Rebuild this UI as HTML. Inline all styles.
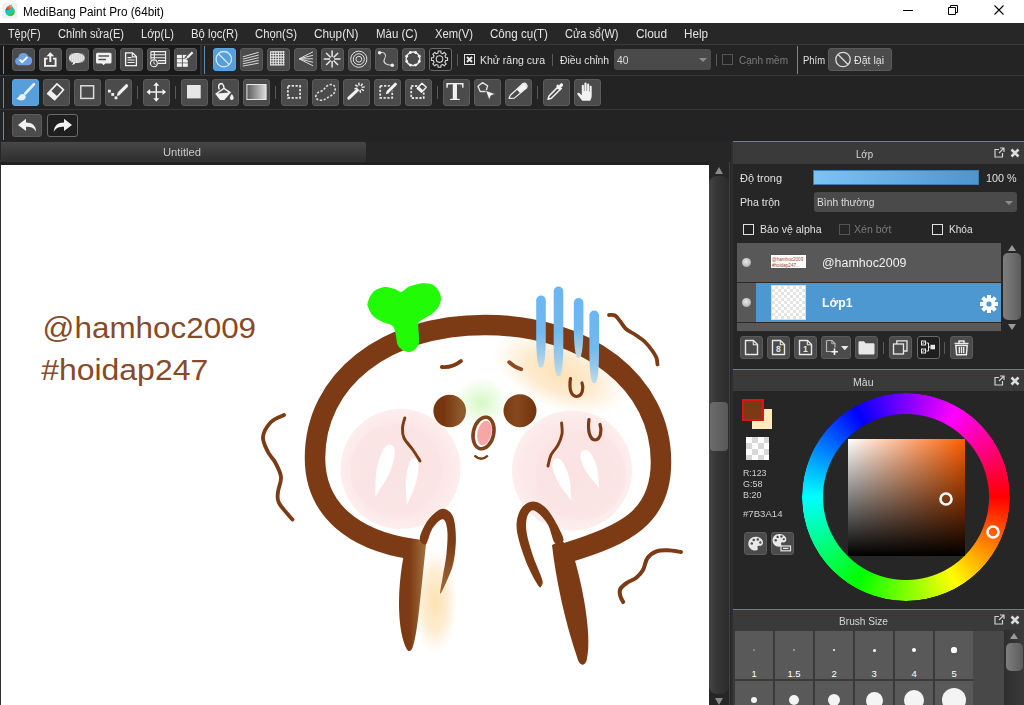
<!DOCTYPE html>
<html lang="vi"><head><meta charset="utf-8"><title>MediBang Paint Pro (64bit)</title>
<style>
html,body{margin:0;padding:0;}
body{width:1024px;height:705px;overflow:hidden;position:relative;background:#262626;font-family:"Liberation Sans",sans-serif;}
.t{position:absolute;white-space:pre;transform-origin:0 50%;display:inline-block;}
.b{position:absolute;box-sizing:border-box;background:#4b4b4b;border:1px solid #5b5b5b;border-radius:3px;}
.b.on{background:#569fda;border-color:#5ea6de;}
.b.dk{background:#1f1f1f;border-color:#6a6a6a;}
.b svg{position:absolute;left:0;top:0;}
.sep{position:absolute;width:1px;background:#5a5a5a;}
svg{display:block;overflow:visible}
</style></head><body>

<div class="" style="position:absolute;left:0px;top:0px;width:1024px;height:23px;background:#fff;"></div>
<svg style="position:absolute;left:2px;top:3px" width="16" height="16" viewBox="2 3 16 16">
<defs>
<linearGradient id="ti1" x1="0.2" y1="0.2" x2="0.8" y2="1"><stop offset="0" stop-color="#18a0e8"/><stop offset="0.45" stop-color="#18c8c8"/><stop offset="0.75" stop-color="#30d040"/><stop offset="1" stop-color="#109828"/></linearGradient>
<linearGradient id="ti2" x1="0" y1="1" x2="1" y2="0"><stop offset="0" stop-color="#e81818"/><stop offset="0.5" stop-color="#f06018"/><stop offset="1" stop-color="#f8c040"/></linearGradient>
</defs>
<rect x="2.3" y="3.1" width="15" height="15.300" rx="1.500" fill="#f0f0f6"/>
<path d="M11.300 4.800C9 5.500 5.300 8 5.300 11.600a4.800 4.600 0 0 0 9.600 0C14.900 9 12.500 7.500 11.300 4.800z" fill="url(#ti1)"/>
<path d="M11.300 4.800C9 5.400 6 7.200 5.500 10C7.500 10.300 10 9.500 11.800 7.800C11.900 6.800 11.700 5.800 11.300 4.800z" fill="url(#ti2)"/>
</svg>

<span class="t" style="left:22.9px;top:6.24px;font-size:12px;line-height:12px;color:#000;font-weight:normal;transform:scaleX(0.9786);">MediBang Paint Pro (64bit)</span>
<svg style="position:absolute;left:880px;top:0" width="144" height="23" viewBox="880 0 144 23" fill="none" stroke="#000" stroke-width="1">
<path d="M903 10.5h10"/>
<path d="M948.5 7.5h7v7h-7zM950.5 7.5v-2h7v7h-2"/>
<path d="M994.5 5.5l9 9M1003.5 5.5l-9 9" stroke-width="1.1"/>
</svg>
<div class="" style="position:absolute;left:0px;top:23px;width:1024px;height:21px;background:#272727;"></div>
<div class="" style="position:absolute;left:0px;top:44px;width:1024px;height:1px;background:#3a3a3a;"></div>
<span class="t" style="left:8.0px;top:28.22px;font-size:12.5px;line-height:12.5px;color:#e4e4e4;font-weight:normal;transform:scaleX(0.8667);">Tệp(F)</span>
<span class="t" style="left:57.5px;top:28.22px;font-size:12.5px;line-height:12.5px;color:#e4e4e4;font-weight:normal;transform:scaleX(0.8874);">Chỉnh sửa(E)</span>
<span class="t" style="left:140.5px;top:28.22px;font-size:12.5px;line-height:12.5px;color:#e4e4e4;font-weight:normal;transform:scaleX(0.8826);">Lớp(L)</span>
<span class="t" style="left:190.5px;top:28.22px;font-size:12.5px;line-height:12.5px;color:#e4e4e4;font-weight:normal;transform:scaleX(0.9022);">Bộ lọc(R)</span>
<span class="t" style="left:254.5px;top:28.22px;font-size:12.5px;line-height:12.5px;color:#e4e4e4;font-weight:normal;transform:scaleX(0.9023);">Chọn(S)</span>
<span class="t" style="left:313.5px;top:28.22px;font-size:12.5px;line-height:12.5px;color:#e4e4e4;font-weight:normal;transform:scaleX(0.9418);">Chụp(N)</span>
<span class="t" style="left:375.5px;top:28.22px;font-size:12.5px;line-height:12.5px;color:#e4e4e4;font-weight:normal;transform:scaleX(0.9190);">Màu (C)</span>
<span class="t" style="left:434.5px;top:28.22px;font-size:12.5px;line-height:12.5px;color:#e4e4e4;font-weight:normal;transform:scaleX(0.8968);">Xem(V)</span>
<span class="t" style="left:489.5px;top:28.22px;font-size:12.5px;line-height:12.5px;color:#e4e4e4;font-weight:normal;transform:scaleX(0.9275);">Công cụ(T)</span>
<span class="t" style="left:564.5px;top:28.22px;font-size:12.5px;line-height:12.5px;color:#e4e4e4;font-weight:normal;transform:scaleX(0.8748);">Cửa sổ(W)</span>
<span class="t" style="left:635.5px;top:28.22px;font-size:12.5px;line-height:12.5px;color:#e4e4e4;font-weight:normal;transform:scaleX(0.9488);">Cloud</span>
<span class="t" style="left:683.5px;top:28.22px;font-size:12.5px;line-height:12.5px;color:#e4e4e4;font-weight:normal;transform:scaleX(0.9332);">Help</span>
<div class="" style="position:absolute;left:0px;top:45px;width:1024px;height:30px;background:#242424;"></div>
<div class="" style="position:absolute;left:0px;top:45px;width:200px;height:30px;background:#191919;"></div>
<div class="" style="position:absolute;left:0px;top:75px;width:1024px;height:1px;background:#383838;"></div>
<div class="" style="position:absolute;left:0px;top:76px;width:1024px;height:33px;background:#232323;"></div>
<div class="" style="position:absolute;left:0px;top:109px;width:1024px;height:1px;background:#383838;"></div>
<div class="" style="position:absolute;left:0px;top:110px;width:1024px;height:31px;background:#232323;"></div>
<div class="" style="position:absolute;left:0px;top:141px;width:1024px;height:23px;background:#262626;"></div>
<div class="" style="position:absolute;left:3px;top:46px;width:1px;height:28px;background:#5b8db5;"></div>
<div class="" style="position:absolute;left:3px;top:78px;width:1px;height:30px;background:#5b8db5;"></div>
<div class="" style="position:absolute;left:3px;top:112px;width:1px;height:28px;background:#5b8db5;"></div>
<div class="" style="position:absolute;left:204px;top:46px;width:1px;height:28px;background:#5b8db5;"></div>
<div class="" style="position:absolute;left:797px;top:46px;width:1px;height:28px;background:#5b8db5;"></div>
<div class="" style="position:absolute;left:200px;top:45px;width:2px;height:30px;background:#333;"></div>
<div class="b " style="left:12px;top:48px;width:23px;height:23px"><svg style="left:-1px;top:-1px" width="23" height="23" viewBox="0 0 23 23"><path d="M6.8 17.2a3.9 3.9 0 0 1-.6-7.7a5.2 5.2 0 0 1 10-1.2a4.5 4.5 0 0 1 .2 8.9z" fill="#6f9fe6"/><path d="M7.6 11.6l2.6 2.6l5.2-5.4" fill="none" stroke="#fff" stroke-width="1.9"/></svg></div>
<div class="b " style="left:39px;top:48px;width:23px;height:23px"><svg style="left:-1px;top:-1px" width="23" height="23" viewBox="0 0 23 23"><path d="M8.6 10.6H6v7.3h10.6v-7.3H14" fill="none" stroke="#f2f2f2" stroke-width="1.9"/><path d="M11.3 14V5.5" stroke="#f2f2f2" stroke-width="2"/><path d="M7.4 8.3l3.9-4l3.9 4z" fill="#f2f2f2"/></svg></div>
<div class="b " style="left:66px;top:48px;width:23px;height:23px"><svg style="left:-1px;top:-1px" width="23" height="23" viewBox="0 0 23 23"><path d="M10.8 5c4.4 0 7.9 2.2 7.9 5s-3.5 5-7.9 5c-.5 0-1 0-1.5-.1c-.6 1-1.700 1.800-3.200 2.200c.7-.8 1-1.700.9-2.700c-2.500-.8-4.100-2.500-4.100-4.400c0-2.800 3.500-5 7.900-5z" fill="#f2f2f2"/><path d="M5.5 5v10" stroke="#b8b8b8" stroke-width=".45"/><path d="M7.7 5v10" stroke="#b8b8b8" stroke-width=".45"/><path d="M9.9 5v10" stroke="#b8b8b8" stroke-width=".45"/><path d="M12.1 5v10" stroke="#b8b8b8" stroke-width=".45"/><path d="M14.3 5v10" stroke="#b8b8b8" stroke-width=".45"/><path d="M16.5 5v10" stroke="#b8b8b8" stroke-width=".45"/><path d="M3 7h16" stroke="#b8b8b8" stroke-width=".45"/><path d="M3 9h16" stroke="#b8b8b8" stroke-width=".45"/><path d="M3 11h16" stroke="#b8b8b8" stroke-width=".45"/><path d="M3 13h16" stroke="#b8b8b8" stroke-width=".45"/></svg></div>
<div class="b " style="left:93px;top:48px;width:23px;height:23px"><svg style="left:-1px;top:-1px" width="23" height="23" viewBox="0 0 23 23"><path d="M4.500 4.800h12.500a1.500 1.500 0 0 1 1.500 1.500v7.600a1.500 1.500 0 0 1-1.500 1.500h-4.700l-1.700 1.800l-1.700-1.800h-4.400a1.500 1.500 0 0 1-1.500-1.500v-7.600a1.500 1.500 0 0 1 1.500-1.500z" fill="#f2f2f2"/><path d="M5.500 8.100h10.500M5.500 11.600h7.500" stroke="#555" stroke-width="1.500"/></svg></div>
<div class="b " style="left:120px;top:48px;width:23px;height:23px"><svg style="left:-1px;top:-1px" width="23" height="23" viewBox="0 0 23 23"><path d="M5.600 4.800h7l3.800 3.800v9.100h-10.800z" fill="none" stroke="#f2f2f2" stroke-width="1.300"/><path d="M12.300 5v3.900h3.900" fill="none" stroke="#f2f2f2" stroke-width="1.100"/><path d="M7.500 9.600h4M7.500 12h7M7.500 14.500h7" stroke="#f2f2f2" stroke-width="1.200"/></svg></div>
<div class="b " style="left:147px;top:48px;width:23px;height:23px"><svg style="left:-1px;top:-1px" width="23" height="23" viewBox="0 0 23 23"><path d="M3.900 3.600h14.700v11.800h-8M3.900 3.600v8M3.900 6.700h14.700M3.900 9.700h14.700M11 12.600h7.600M7.300 3.600v7.500" fill="none" stroke="#f2f2f2" stroke-width="1.100"/><circle cx="6.900" cy="15.300" r="3.400" fill="#4b4b4b" stroke="#f2f2f2" stroke-width="1.100"/><path d="M6.900 13.400v2l1.500 1" fill="none" stroke="#f2f2f2" stroke-width=".9"/></svg></div>
<div class="b " style="left:174px;top:48px;width:23px;height:23px"><svg style="left:-1px;top:-1px" width="23" height="23" viewBox="0 0 23 23"><rect x="2.9" y="6.9" width="5" height="3.500" fill="#f2f2f2"/><rect x="2.9" y="11.1" width="5" height="3.500" fill="#f2f2f2"/><rect x="2.9" y="15.3" width="5" height="3.500" fill="#f2f2f2"/><rect x="8.8" y="6.9" width="5" height="3.500" fill="#f2f2f2"/><rect x="8.8" y="11.1" width="5" height="3.500" fill="#f2f2f2"/><rect x="8.8" y="15.3" width="5" height="3.500" fill="#f2f2f2"/><path d="M18.300 4.500l-6.300 6.300" stroke="#4b4b4b" stroke-width="4.500"/><path d="M18.600 4.300l-5.400 5.400" stroke="#f2f2f2" stroke-width="2.300"/><path d="M11.300 11.600l.6-2.400l1.800 1.800z" fill="#f2f2f2"/></svg></div>
<div class="b on" style="left:213px;top:48px;width:23px;height:23px"><svg style="left:-1px;top:-1px" width="23" height="23" viewBox="0 0 23 23"><circle cx="10.800" cy="11.200" r="7.700" fill="none" stroke="#d2e8fa" stroke-width="1.300"/><path d="M5.400 5.700l10.900 10.900" stroke="#d2e8fa" stroke-width="1.300"/></svg></div>
<div class="b " style="left:240px;top:48px;width:23px;height:23px"><svg style="left:-1px;top:-1px" width="23" height="23" viewBox="0 0 23 23"><path d="M2.800 8.9L18.700 4.3" stroke="#d8d8d8" stroke-width="1"/><path d="M2.800 11.2L18.700 7.0" stroke="#d8d8d8" stroke-width="1"/><path d="M2.800 13.5L18.700 9.7" stroke="#d8d8d8" stroke-width="1"/><path d="M2.800 15.8L18.700 12.4" stroke="#d8d8d8" stroke-width="1"/><path d="M2.800 18.1L18.700 15.1" stroke="#d8d8d8" stroke-width="1"/></svg></div>
<div class="b " style="left:267px;top:48px;width:23px;height:23px"><svg style="left:-1px;top:-1px" width="23" height="23" viewBox="0 0 23 23"><path d="M3.6 3.200v14M3 3.9h14.500" stroke="#e4e4e4" stroke-width="1.100"/><path d="M6.2 3.200v14M3 6.5h14.500" stroke="#e4e4e4" stroke-width="1.100"/><path d="M8.8 3.200v14M3 9.1h14.500" stroke="#e4e4e4" stroke-width="1.100"/><path d="M11.4 3.200v14M3 11.7h14.500" stroke="#e4e4e4" stroke-width="1.100"/><path d="M14.0 3.200v14M3 14.3h14.500" stroke="#e4e4e4" stroke-width="1.100"/><path d="M16.6 3.200v14M3 16.9h14.500" stroke="#e4e4e4" stroke-width="1.100"/></svg></div>
<div class="b " style="left:294px;top:48px;width:23px;height:23px"><svg style="left:-1px;top:-1px" width="23" height="23" viewBox="0 0 23 23"><path d="M5.100 10.800L19 3.8" stroke="#dcdcdc" stroke-width="1"/><path d="M5.100 10.800L19 7.3" stroke="#dcdcdc" stroke-width="1"/><path d="M5.100 10.800L19 10.8" stroke="#dcdcdc" stroke-width="1"/><path d="M5.100 10.800L19 14.3" stroke="#dcdcdc" stroke-width="1"/><path d="M5.100 10.800L19 17.8" stroke="#dcdcdc" stroke-width="1"/></svg></div>
<div class="b " style="left:321px;top:48px;width:23px;height:23px"><svg style="left:-1px;top:-1px" width="23" height="23" viewBox="0 0 23 23"><path d="M13.10 11.00L19.50 11.00" stroke="#e8e8e8" stroke-width="1.500"/><path d="M12.51 12.41L17.04 16.94" stroke="#e8e8e8" stroke-width="1.500"/><path d="M11.10 13.00L11.10 19.40" stroke="#e8e8e8" stroke-width="1.500"/><path d="M9.69 12.41L5.16 16.94" stroke="#e8e8e8" stroke-width="1.500"/><path d="M9.10 11.00L2.70 11.00" stroke="#e8e8e8" stroke-width="1.500"/><path d="M9.69 9.59L5.16 5.06" stroke="#e8e8e8" stroke-width="1.500"/><path d="M11.10 9.00L11.10 2.60" stroke="#e8e8e8" stroke-width="1.500"/><path d="M12.51 9.59L17.04 5.06" stroke="#e8e8e8" stroke-width="1.500"/></svg></div>
<div class="b " style="left:348px;top:48px;width:23px;height:23px"><svg style="left:-1px;top:-1px" width="23" height="23" viewBox="0 0 23 23"><circle cx="10.800" cy="11.200" r="8.1" fill="none" stroke="#e0e0e0" stroke-width="1"/><circle cx="10.800" cy="11.200" r="5.5" fill="none" stroke="#e0e0e0" stroke-width="1"/><circle cx="10.800" cy="11.200" r="2.9" fill="none" stroke="#e0e0e0" stroke-width="1"/></svg></div>
<div class="b " style="left:375px;top:48px;width:23px;height:23px"><svg style="left:-1px;top:-1px" width="23" height="23" viewBox="0 0 23 23"><path d="M4.500 4.800C11 3.500 11.500 8 9.500 11C7.500 14.500 11 17.500 17.300 17.200" fill="none" stroke="#d8d8d8" stroke-width="1.100"/><circle cx="4.600" cy="4.800" r="1.800" fill="#eee"/><circle cx="17.300" cy="17.200" r="1.800" fill="#eee"/></svg></div>
<div class="b " style="left:402px;top:48px;width:23px;height:23px"><svg style="left:-1px;top:-1px" width="23" height="23" viewBox="0 0 23 23"><circle cx="11" cy="10.800" r="6.800" fill="none" stroke="#e4e4e4" stroke-width="1.500"/><circle cx="17.28" cy="13.40" r="1.400" fill="#f4f4f4"/><circle cx="13.60" cy="17.08" r="1.400" fill="#f4f4f4"/><circle cx="8.40" cy="17.08" r="1.400" fill="#f4f4f4"/><circle cx="4.72" cy="13.40" r="1.400" fill="#f4f4f4"/><circle cx="4.72" cy="8.20" r="1.400" fill="#f4f4f4"/><circle cx="8.40" cy="4.52" r="1.400" fill="#f4f4f4"/><circle cx="13.60" cy="4.52" r="1.400" fill="#f4f4f4"/><circle cx="17.28" cy="8.20" r="1.400" fill="#f4f4f4"/></svg></div>
<div class="b dk" style="left:429px;top:48px;width:23px;height:23px"><svg style="left:-1px;top:-1px" width="23" height="23" viewBox="0 0 23 23"><path d="M18.58 9.69L18.58 12.51L16.63 12.57L15.87 14.39L17.21 15.82L15.22 17.81L13.79 16.47L11.97 17.23L11.91 19.18L9.09 19.18L9.03 17.23L7.21 16.47L5.78 17.81L3.79 15.82L5.13 14.39L4.37 12.57L2.42 12.51L2.42 9.69L4.37 9.63L5.13 7.81L3.79 6.38L5.78 4.39L7.21 5.73L9.03 4.97L9.09 3.02L11.91 3.02L11.97 4.97L13.79 5.73L15.22 4.39L17.21 6.38L15.87 7.81L16.63 9.63Z" fill="none" stroke="#d8d8d8" stroke-width="1.100" stroke-linejoin="round"/><circle cx="10.500" cy="11.100" r="3.300" fill="none" stroke="#d8d8d8" stroke-width="1.100"/></svg></div>
<div class="sep" style="left:457px;top:54px;height:12px"></div>
<div class="" style="position:absolute;left:464px;top:54px;width:11px;height:11px;box-sizing:border-box;border:1px solid #e0e0e0;background:#222;"><svg width="9" height="9" viewBox="0 0 9 9"><path d="M2 2l5 5M7 2l-5 5" stroke="#e8e8e8" stroke-width="2"/></svg></div>
<span class="t" style="left:480.0px;top:54.57px;font-size:11.5px;line-height:11.5px;color:#e0e0e0;font-weight:normal;transform:scaleX(0.9151);">Khử răng cưa</span>
<div class="sep" style="left:552px;top:54px;height:12px"></div>
<span class="t" style="left:560.0px;top:54.57px;font-size:11.5px;line-height:11.5px;color:#e0e0e0;font-weight:normal;transform:scaleX(0.9017);">Điều chỉnh</span>
<div class="" style="position:absolute;left:614px;top:49px;width:97px;height:21px;background:#4a4a4a;border-radius:3px;"></div>
<span class="t" style="left:617.0px;top:54.99px;font-size:11px;line-height:11px;color:#dcdcdc;font-weight:normal;transform:scaleX(0.9388);">40</span>
<svg style="position:absolute;left:699px;top:58px" width="8" height="4"><path d="M0 0h8l-4 4z" fill="#8c8c8c"/></svg>
<div class="sep" style="left:716px;top:54px;height:12px"></div>
<div class="" style="position:absolute;left:722px;top:54px;width:11px;height:11px;box-sizing:border-box;border:1px solid #555;"></div>
<span class="t" style="left:739.0px;top:54.57px;font-size:11.5px;line-height:11.5px;color:#7c7c7c;font-weight:normal;transform:scaleX(0.8711);">Cạnh mềm</span>
<span class="t" style="left:803.0px;top:54.57px;font-size:11.5px;line-height:11.5px;color:#e0e0e0;font-weight:normal;transform:scaleX(0.8196);">Phím</span>
<div class="b " style="left:828px;top:48px;width:64px;height:23px"><svg width="62" height="21" viewBox="0 0 62 21"><circle cx="14" cy="10.5" r="7.2" fill="none" stroke="#dcdcdc" stroke-width="1.3"/><path d="M9 5.5l10 10" stroke="#dcdcdc" stroke-width="1.3"/></svg></div>
<span class="t" style="left:854.0px;top:54.57px;font-size:11.5px;line-height:11.5px;color:#e0e0e0;font-weight:normal;transform:scaleX(0.9200);">Đặt lại</span>
<div class="b on" style="left:12px;top:79px;width:27px;height:27px"><svg style="left:-1px;top:-1px" width="27" height="27" viewBox="0 0 27 27"><path d="M22 5.200L13.300 14.500" stroke="#e8f2fa" stroke-width="2.600" stroke-linecap="round"/><path d="M4.300 19.300c1.500-.3 2.500-1.500 3.500-3.300c1.500-1.500 4-1.500 5.300 0c1.200 1.500.8 3.500-1 4.700c-2.300 1.300-5.500.8-7.800-1.400z" fill="#e8f2fa"/></svg></div>
<div class="b " style="left:43px;top:79px;width:27px;height:27px"><svg style="left:-1px;top:-1px" width="27" height="27" viewBox="0 0 27 27"><path d="M14 4.800l6.600 6l-9 9.800l-6.900-6z" fill="none" stroke="#f2f2f2" stroke-width="1.700" stroke-linejoin="round"/><path d="M7.800 11.500l6.700 6l-3 3.200l-6.800-6z" fill="#f2f2f2"/></svg></div>
<div class="b " style="left:74px;top:79px;width:27px;height:27px"><svg style="left:-1px;top:-1px" width="27" height="27" viewBox="0 0 27 27"><rect x="6.800" y="6.800" width="12.800" height="12.600" fill="none" stroke="#dcdcdc" stroke-width="1.500"/></svg></div>
<div class="b " style="left:105px;top:79px;width:27px;height:27px"><svg style="left:-1px;top:-1px" width="27" height="27" viewBox="0 0 27 27"><rect x="3" y="10.700" width="2.800" height="2.800" fill="#f2f2f2"/><rect x="6.300" y="14" width="2.800" height="2.800" fill="#f2f2f2"/><rect x="9.600" y="17.400" width="2.800" height="2.800" fill="#f2f2f2"/><path d="M21.500 6.800l-7 7.100" stroke="#f2f2f2" stroke-width="3.200" stroke-linecap="round"/><path d="M11.800 17l1-3.500l2.600 2.500z" fill="#f2f2f2"/></svg></div>
<div class="b " style="left:143px;top:79px;width:27px;height:27px"><svg style="left:-1px;top:-1px" width="27" height="27" viewBox="0 0 27 27"><path d="M13.300 5.500v15M5.800 13h15" stroke="#f2f2f2" stroke-width="1.500"/><path d="M13.300 3.200l3 3.600h-6zM13.300 22.800l3-3.600h-6zM3.500 13l3.600-3v6zM23.100 13l-3.600-3v6z" fill="#f2f2f2"/></svg></div>
<div class="b " style="left:181px;top:79px;width:27px;height:27px"><svg style="left:-1px;top:-1px" width="27" height="27" viewBox="0 0 27 27"><rect x="6" y="6" width="13.700" height="13.400" fill="#e6e6e6"/></svg></div>
<div class="b " style="left:212px;top:79px;width:27px;height:27px"><svg style="left:-1px;top:-1px" width="27" height="27" viewBox="0 0 27 27"><path d="M3.200 14.800l8.700-6.200l7.200 4.700l-6.800 7.700h-4.300z" fill="#f2f2f2"/><path d="M5.800 14.500l6.100-4.300l4.800 3.200z" fill="#4b4b4b"/><path d="M7.300 10.500c-1-2.500-.5-5 1.200-5.800c1.700-.6 3 1 3.600 4.200" fill="none" stroke="#f2f2f2" stroke-width="1.500"/><path d="M19.800 15c1.300 2 1.900 3.200 1.900 4.100a1.900 1.900 0 0 1-3.800 0c0-.9.600-2.100 1.900-4.100z" fill="#f2f2f2"/></svg></div>
<div class="b " style="left:243px;top:79px;width:27px;height:27px"><svg style="left:-1px;top:-1px" width="27" height="27" viewBox="0 0 27 27"><defs><linearGradient id="tg"><stop offset="0" stop-color="#5a5a5a"/><stop offset="1" stop-color="#dedede"/></linearGradient></defs><rect x="3.900" y="5.500" width="19.200" height="15" fill="url(#tg)" stroke="#e8e8e8" stroke-width="1"/></svg></div>
<div class="b " style="left:281px;top:79px;width:27px;height:27px"><svg style="left:-1px;top:-1px" width="27" height="27" viewBox="0 0 27 27"><rect x="6.9" y="6.9" width="12.2" height="12" fill="none" stroke="#e0e0e0" stroke-width="1.800" stroke-dasharray="2.300 1.500"/></svg></div>
<div class="b " style="left:312px;top:79px;width:27px;height:27px"><svg style="left:-1px;top:-1px" width="27" height="27" viewBox="0 0 27 27"><path d="M4.200 16c-1.500 3 1 5.500 5 5.200c4-.3 6-2.500 9-4c3-1.500 5.500-4 5-8c-.5-3.500-4-4.500-7-3c-3 1.500-3.500 4.500-6.500 5.700c-2.500 1-4.500 1.600-5.500 4.100z" fill="none" stroke="#dcdcdc" stroke-width="1.600" stroke-dasharray="2.200 1.600"/></svg></div>
<div class="b " style="left:343px;top:79px;width:27px;height:27px"><svg style="left:-1px;top:-1px" width="27" height="27" viewBox="0 0 27 27"><path d="M5.800 19.200l8.600-8" stroke="#f2f2f2" stroke-width="3" stroke-linecap="round"/><path d="M16.22 6.63L15.70 3.68" stroke="#f2f2f2" stroke-width="1.400"/><path d="M17.86 7.00L19.58 4.54" stroke="#f2f2f2" stroke-width="1.400"/><path d="M18.77 8.42L21.72 7.90" stroke="#f2f2f2" stroke-width="1.400"/><path d="M18.40 10.06L20.86 11.78" stroke="#f2f2f2" stroke-width="1.400"/><path d="M16.98 10.97L17.50 13.92" stroke="#f2f2f2" stroke-width="1.400"/><path d="M14.43 9.18L11.48 9.70" stroke="#f2f2f2" stroke-width="1.400"/><path d="M14.80 7.54L12.34 5.82" stroke="#f2f2f2" stroke-width="1.400"/></svg></div>
<div class="b " style="left:374px;top:79px;width:27px;height:27px"><svg style="left:-1px;top:-1px" width="27" height="27" viewBox="0 0 27 27"><rect x="6.2" y="6.8" width="12" height="12" fill="none" stroke="#e0e0e0" stroke-width="1.800" stroke-dasharray="2.300 1.500"/><path d="M21.500 5l-9 9.200" stroke="#4b4b4b" stroke-width="5"/><path d="M21.400 5.200l-7 7.100" stroke="#f2f2f2" stroke-width="3" stroke-linecap="round"/><path d="M11.700 15.200l1-3.300l2.400 2.300z" fill="#f2f2f2"/></svg></div>
<div class="b " style="left:405px;top:79px;width:27px;height:27px"><svg style="left:-1px;top:-1px" width="27" height="27" viewBox="0 0 27 27"><rect x="6.2" y="7" width="12.5" height="12" fill="none" stroke="#e0e0e0" stroke-width="1.800" stroke-dasharray="2.300 1.500"/><path d="M16.800 2.800l5.800 5.400l-6 6.200l-5.900-5.400z" fill="#4b4b4b"/><path d="M17 4.300l4.300 4l-4.800 5l-4.400-4z" fill="none" stroke="#f2f2f2" stroke-width="1.400" stroke-linejoin="round"/><path d="M13.800 7.500l4.500 4l-1.800 1.900l-4.400-4z" fill="#f2f2f2"/></svg></div>
<div class="b " style="left:443px;top:79px;width:27px;height:27px"><span style="position:absolute;left:2.200px;top:-2.500px;font-family:'Liberation Serif',serif;font-weight:bold;font-size:25.500px;line-height:27px;color:#f0f0f0;transform:scaleX(1.05);transform-origin:0 0">T</span></div>
<div class="b " style="left:474px;top:79px;width:27px;height:27px"><svg style="left:-1px;top:-1px" width="27" height="27" viewBox="0 0 27 27"><path d="M8.600 3.600l5 3.300l-1.600 5.600h-5.800l-2.200-5.300z" fill="none" stroke="#e0e0e0" stroke-width="1.400" stroke-linejoin="round"/><path d="M11.500 11.300l10 3.700l-4.500 1.700l-1.800 4.600z" fill="#f2f2f2" stroke="#4b4b4b" stroke-width=".8"/></svg></div>
<div class="b " style="left:505px;top:79px;width:27px;height:27px"><svg style="left:-1px;top:-1px" width="27" height="27" viewBox="0 0 27 27"><path d="M4 19.300l5.300-.2l12.300-10.300a2.900 2.900 0 0 0-3.600-4.300l-12.600 11.800z" fill="none" stroke="#f2f2f2" stroke-width="1.200" stroke-linejoin="round"/><path d="M11.800 10.800l6.200-5.800a2.900 2.900 0 0 1 3.600 3.900l-6.300 5.400z" fill="#f2f2f2"/></svg></div>
<div class="b " style="left:543px;top:79px;width:27px;height:27px"><svg style="left:-1px;top:-1px" width="27" height="27" viewBox="0 0 27 27"><path d="M5 20.300l1-3.300l8.500-8.600l2.400 2.400l-8.500 8.500z" fill="none" stroke="#f2f2f2" stroke-width="1.500" stroke-linejoin="round"/><path d="M13 7l1.800-1.700l1.300 1.200c.5-1.800 2.200-3 3.500-1.800c1.300 1.200.2 3-1.700 3.600l1.300 1.300l-1.700 1.800z" fill="#f2f2f2"/></svg></div>
<div class="b " style="left:574px;top:79px;width:27px;height:27px"><svg style="left:-1px;top:-1px" width="27" height="27" viewBox="0 0 27 27"><path d="M8.300 21.800c-1.500-2-3.500-4.500-4.800-6.300c-.8-1.300.7-2.400 1.900-1.400l2.400 2.200v-9.500c0-1.500 2-1.500 2.100 0v5.300h.5v-7.300c0-1.600 2.100-1.600 2.200 0v7.200h.5v-6.300c0-1.500 2.100-1.500 2.100 0v6.700h.5v-4.600c0-1.400 2-1.400 2 0v8.500c0 2.300-.6 4-1.500 5.500z" fill="#f2f2f2"/></svg></div>
<div class="sep" style="left:137px;top:86px;height:13px"></div>
<div class="sep" style="left:175px;top:86px;height:13px"></div>
<div class="sep" style="left:275px;top:86px;height:13px"></div>
<div class="sep" style="left:437px;top:86px;height:13px"></div>
<div class="sep" style="left:537px;top:86px;height:13px"></div>
<div class="b " style="left:12px;top:114px;width:30px;height:23px"><svg style="left:-1px;top:-1px" width="30" height="23" viewBox="0 0 30 23"><path d="M6 11l8-6.300v3.800c6 0 10 3 10.200 9.500c-2-4-5-5.200-10.200-5.200v4.200z" fill="#f2f2f2"/></svg></div>
<div class="b dk" style="left:47px;top:114px;width:31px;height:23px"><svg style="left:-1px;top:-1px" width="31" height="23" viewBox="0 0 31 23"><path d="M25 11l-8-6.300v3.800c-6 0-10 3-10.200 9.500c2-4 5-5.200 10.200-5.200v4.200z" fill="#f2f2f2"/></svg></div>
<div class="" style="position:absolute;left:1px;top:142px;width:365px;height:18px;background:linear-gradient(#474747,#303030);border-radius:0 2px 0 0;"></div>
<div class="" style="position:absolute;left:0px;top:160px;width:366px;height:2px;background:#313131;"></div>
<span class="t" style="left:163.0px;top:146.57px;font-size:11.5px;line-height:11.5px;color:#c8c8c8;font-weight:normal;transform:scaleX(0.9744);">Untitled</span>
<div class="" style="position:absolute;left:0px;top:162px;width:709px;height:3px;background:#212121;"></div>
<div class="" style="position:absolute;left:0px;top:164px;width:1px;height:541px;background:#303030;"></div>
<div class="" style="position:absolute;left:1px;top:165px;width:708px;height:540px;background:#fff;overflow:hidden;"><svg width="708" height="540" viewBox="1 165 708 540">
<defs>
<radialGradient id="ck"><stop offset="0" stop-color="#fbe3e3"/><stop offset="0.8" stop-color="#fce8e8"/><stop offset="1" stop-color="#fdeeee"/></radialGradient>
<radialGradient id="gg"><stop offset="0" stop-color="#d6f8c4"/><stop offset="1" stop-color="#d6f8c4" stop-opacity="0"/></radialGradient>
<radialGradient id="pg"><stop offset="0" stop-color="#fde2b8"/><stop offset="0.5" stop-color="#fde6c4" stop-opacity="0.85"/><stop offset="1" stop-color="#fdeacc" stop-opacity="0"/></radialGradient>
<radialGradient id="pg2"><stop offset="0" stop-color="#fde2b2"/><stop offset="0.55" stop-color="#fde6c0" stop-opacity="0.75"/><stop offset="1" stop-color="#fdeacc" stop-opacity="0"/></radialGradient>
<linearGradient id="bl" x1="0" y1="0" x2="0" y2="1"><stop offset="0" stop-color="#68b4f2"/><stop offset="0.55" stop-color="#72b8ee"/><stop offset="1" stop-color="#b8d8e8" stop-opacity="0.75"/></linearGradient>
<linearGradient id="eye" x1="0" y1="0" x2="1" y2="0"><stop offset="0.3" stop-color="#76350f"/><stop offset="0.85" stop-color="#8f5a2c"/></linearGradient><linearGradient id="eye2" x1="0" y1="0" x2="1" y2="0"><stop offset="0" stop-color="#7a3a12"/><stop offset="0.4" stop-color="#85491d"/><stop offset="0.9" stop-color="#76350f"/></linearGradient>
</defs>
<text x="42.6" y="337.8" font-family="Liberation Sans, sans-serif" font-size="29" fill="#87492a" textLength="213.5" lengthAdjust="spacingAndGlyphs">@hamhoc2009</text>
<text x="41.2" y="379.5" font-family="Liberation Sans, sans-serif" font-size="29" fill="#87492a" textLength="167" lengthAdjust="spacingAndGlyphs">#hoidap247</text>
<ellipse cx="560" cy="373" rx="70" ry="36" fill="url(#pg)" transform="rotate(22 560 373)"/>
<ellipse cx="481.5" cy="402.5" rx="27" ry="25" fill="url(#gg)"/>
<ellipse cx="435" cy="602" rx="22" ry="52" fill="url(#pg2)"/>
<circle cx="400.5" cy="469" r="60" fill="url(#ck)"/>
<circle cx="572" cy="470.5" r="60" fill="url(#ck)"/>
<circle cx="581" cy="475" r="45" fill="#fbe2e2" opacity="0.55"/>
<circle cx="396" cy="470" r="46" fill="#fbe2e2" opacity="0.4"/>
<path d="M375.2 497.0C376.1 485.9 374.4 475.2 378.5 461.6C382.3 449.2 385.8 443.4 391.0 445.0C396.2 446.6 395.9 453.3 392.2 465.8C388.0 479.3 380.6 487.3 375.2 497.0Z" fill="#fff"/>
<path d="M406.8 505.5C406.7 495.7 404.5 486.5 406.6 474.2C408.6 462.8 410.9 457.3 415.0 458.0C419.1 458.7 419.4 464.6 417.5 476.0C415.3 488.4 410.2 496.3 406.8 505.5Z" fill="#fff"/>
<path d="M571.5 501.0C566.3 493.2 559.4 487.1 555.2 476.1C551.4 465.9 550.9 460.2 555.5 458.5C560.1 456.8 563.4 461.3 567.3 471.5C571.4 482.6 570.3 491.8 571.5 501.0Z" fill="#fff"/>
<path d="M599.3 488.0C594.2 481.3 587.5 476.2 583.4 466.5C579.6 457.5 579.0 452.4 583.5 450.5C588.0 448.6 591.2 452.5 595.0 461.5C599.1 471.3 598.0 479.7 599.3 488.0Z" fill="#fff"/>
<path d="M420 550.2L412 549C354 540.3 315 510 315 458C315 380 385 325 485 325C588 325 661 383 661 462C661 517 626 535 566 553L560.3 554.7" fill="none" stroke="#7c3b14" stroke-width="20.5" stroke-linecap="butt" stroke-linejoin="round"/>
<linearGradient id="lbg" gradientUnits="userSpaceOnUse" x1="400" y1="0" x2="428" y2="0"><stop offset="0.35" stop-color="#7c3b14"/><stop offset="0.8" stop-color="#9c6636"/><stop offset="1" stop-color="#a87444"/></linearGradient>
<path d="M404 554C396.5 592 397.5 632 407 649.5C408.5 652 411 651.5 412.5 648C418 632 420 598 426.5 540L412 540Z" fill="url(#lbg)"/>
<path d="M552 545C556 580 565 622 578 660C580 666 584.5 666 586.5 661C592 640 585 595 574 557L562 540Z" fill="#7c3b14"/>
<linearGradient id="lag" gradientUnits="userSpaceOnUse" x1="0" y1="520" x2="0" y2="594"><stop offset="0.3" stop-color="#7c3b14"/><stop offset="1" stop-color="#a06a3a"/></linearGradient>
<path d="M419.8 538.2C420.0 534.4 424.0 526.1 427.0 521.5C430.0 516.9 434.6 512.7 437.8 510.7C441.0 508.7 443.7 508.3 446.3 509.5C448.9 510.7 451.9 513.1 453.5 517.9C455.1 522.7 455.9 531.0 455.9 538.4C455.9 545.8 454.9 555.7 453.5 562.5C452.1 569.3 449.7 574.1 447.5 579.3C445.3 584.5 441.0 594.2 440.2 593.8C439.4 593.4 441.7 583.3 442.7 576.9C443.7 570.5 445.5 562.4 446.3 555.2C447.1 548.0 447.7 539.2 447.5 533.6C447.3 528.0 446.3 523.5 445.1 521.3C443.9 519.0 442.4 518.7 440.2 520.1C438.0 521.5 434.2 525.7 431.8 529.7C429.4 533.7 427.8 542.8 425.8 544.2C423.8 545.6 419.6 542.0 419.8 538.2Z" fill="url(#lag)"/>
<path d="M538.3 585.7C536.1 582.5 531.3 574.1 528.1 566.6C524.9 559.1 521.0 548.2 519.1 541.0C517.2 533.8 516.2 528.7 516.6 523.2C517.0 517.7 518.9 511.5 521.7 507.9C524.5 504.3 529.2 501.5 533.2 501.5C537.2 501.5 542.1 504.3 545.9 507.9C549.7 511.5 553.3 517.9 556.2 523.2C559.1 528.6 563.7 536.7 563.5 540.0C563.3 543.3 557.4 545.4 554.9 543.0C552.4 540.6 551.0 530.5 548.5 525.7C546.0 520.9 542.4 516.8 539.6 514.2C536.8 511.7 534.0 509.8 531.9 510.4C529.8 511.0 527.6 514.3 526.8 518.1C525.9 521.9 525.7 527.0 526.8 533.4C527.9 539.8 530.7 548.8 533.2 556.4C535.8 564.0 540.7 574.4 542.1 579.3C543.5 584.2 542.1 584.6 541.5 585.7C540.9 586.8 540.5 588.9 538.3 585.7Z" fill="#7c3b14"/>
<path d="M367.7 302.7C368.5 300.1 370.3 294.6 373.0 292.0C375.7 289.4 380.4 287.5 384.0 287.0C387.6 286.5 391.9 288.1 394.8 288.9C397.7 289.7 399.0 292.3 401.4 291.9C403.8 291.5 405.6 287.9 409.3 286.5C413.0 285.1 419.6 283.3 423.8 283.2C428.0 283.1 431.8 283.8 434.6 285.9C437.4 287.9 439.8 292.3 440.6 295.5C441.4 298.7 440.8 302.2 439.4 305.2C438.0 308.2 435.0 311.2 432.2 313.6C429.4 316.0 424.8 318.0 422.5 319.6C420.2 321.2 418.9 320.7 418.3 323.3C417.7 325.9 418.9 331.7 418.9 335.3C418.9 338.9 419.5 342.3 418.3 345.0C417.1 347.7 414.2 350.7 411.7 351.6C409.2 352.5 405.6 351.5 403.3 350.4C401.0 349.3 399.1 347.9 397.8 345.0C396.5 342.1 396.3 336.1 395.4 332.9C394.5 329.7 394.5 327.5 392.4 325.7C390.3 323.9 385.9 323.6 382.7 322.0C379.5 320.4 375.4 318.4 373.0 316.0C370.6 313.6 369.2 309.8 368.3 307.6C367.4 305.4 366.9 305.3 367.7 302.7Z" fill="#22fb06"/>
<circle cx="449.7" cy="411" r="16.3" fill="url(#eye)"/>
<circle cx="520" cy="410.7" r="16.5" fill="url(#eye2)"/>
<path d="M441.8 367Q452.5 368 461 361" fill="none" stroke="#7c3b14" stroke-width="3.8" stroke-linecap="round"/>
<path d="M509.2 362.2Q514 367 521.3 369.2" fill="none" stroke="#8c4d24" stroke-width="3.8" stroke-linecap="round"/>
<ellipse cx="483.5" cy="433" rx="10.2" ry="16" fill="#fff" stroke="#80421a" stroke-width="3.6" transform="rotate(12 483.5 433)"/>
<ellipse cx="484.3" cy="433" rx="6.9" ry="12.4" fill="#f6a6a4" transform="rotate(12 484.3 433)"/>
<path d="M475.2 456.2Q481 461.5 487.2 456.2" fill="none" stroke="#7c3b14" stroke-width="2.4" stroke-linecap="round"/>
<path d="M404.8 418.0C404.4 419.7 402.6 424.7 402.5 428.0C402.4 431.3 402.2 434.3 404.0 438.0C405.8 441.7 410.3 446.2 413.0 450.0C415.7 453.8 418.8 459.2 420.0 461.0" fill="none" stroke="#7c3b14" stroke-width="2.9" stroke-linecap="round"/>
<path d="M561.6 423.0C561.7 424.8 562.6 430.3 562.0 434.0C561.4 437.7 559.8 441.5 558.0 445.0C556.2 448.5 552.7 451.5 551.0 455.0C549.3 458.5 548.5 464.2 548.0 466.0" fill="none" stroke="#7c3b14" stroke-width="2.9" stroke-linecap="round"/>
<path d="M570.5 378.5C569 388 570.5 396 576.5 396.5C582.5 396 584 388 582 383" fill="none" stroke="#7c3b14" stroke-width="3.2" stroke-linecap="round"/>
<path d="M589 419.5C587.5 430 589.5 439.5 595 440C601 439.5 602 430 600 424.5" fill="none" stroke="#7c3b14" stroke-width="3.2" stroke-linecap="round"/>
<linearGradient id="bl0" gradientUnits="userSpaceOnUse" x1="0" y1="295.5" x2="0" y2="368"><stop offset="0" stop-color="#6ab6f4"/><stop offset="0.5" stop-color="#70b8f0"/><stop offset="0.8" stop-color="#9ccbe8"/><stop offset="1" stop-color="#c4dce4"/></linearGradient>
<path d="M536.2 300.3A4.8 4.8 0 0 1 545.8 300.3L545.8 340Q545.5 360 543.2 366.5Q541 369 538.8 366.5Q536.5 360 536.2 340Z" fill="url(#bl0)"/>
<linearGradient id="bl1" gradientUnits="userSpaceOnUse" x1="0" y1="286.5" x2="0" y2="376.5"><stop offset="0" stop-color="#6ab6f4"/><stop offset="0.5" stop-color="#70b8f0"/><stop offset="0.8" stop-color="#9ccbe8"/><stop offset="1" stop-color="#c4dce4"/></linearGradient>
<path d="M553.7 291.3A4.8 4.8 0 0 1 563.3 291.3L563.3 348.5Q563.0 368.5 560.7 375.0Q558.5 377.5 556.3 375.0Q554.0 368.5 553.7 348.5Z" fill="url(#bl1)"/>
<linearGradient id="bl2" gradientUnits="userSpaceOnUse" x1="0" y1="298" x2="0" y2="358"><stop offset="0" stop-color="#6ab6f4"/><stop offset="0.5" stop-color="#70b8f0"/><stop offset="0.8" stop-color="#9ccbe8"/><stop offset="1" stop-color="#c4dce4"/></linearGradient>
<path d="M573.8000000000001 302.8A4.8 4.8 0 0 1 583.4 302.8L583.4 330Q583.1 350 580.8000000000001 356.5Q578.6 359 576.4 356.5Q574.1 350 573.8000000000001 330Z" fill="url(#bl2)"/>
<linearGradient id="bl3" gradientUnits="userSpaceOnUse" x1="0" y1="310.5" x2="0" y2="383.5"><stop offset="0" stop-color="#6ab6f4"/><stop offset="0.5" stop-color="#70b8f0"/><stop offset="0.8" stop-color="#9ccbe8"/><stop offset="1" stop-color="#c4dce4"/></linearGradient>
<path d="M589.4000000000001 315.3A4.8 4.8 0 0 1 599.0 315.3L599.0 355.5Q598.7 375.5 596.4000000000001 382.0Q594.2 384.5 592.0 382.0Q589.7 375.5 589.4000000000001 355.5Z" fill="url(#bl3)"/>
<path d="M284.0 415.0C281.8 416.2 274.5 418.3 271.0 422.0C267.5 425.7 263.5 432.0 263.0 437.0C262.5 442.0 266.0 447.8 268.0 452.0C270.0 456.2 272.8 457.8 275.0 462.0C277.2 466.2 280.5 472.0 281.0 477.0C281.5 482.0 278.3 487.7 278.0 492.0C277.7 496.3 276.6 498.4 279.0 503.0C281.4 507.6 290.2 516.8 292.5 519.5" fill="none" stroke="#7c3b14" stroke-width="3.8" stroke-linecap="round"/>
<path d="M609.0 315.0C610.0 315.1 613.2 314.5 615.0 315.5C616.8 316.5 618.2 318.8 620.0 321.0C621.8 323.2 623.5 326.8 626.0 329.0C628.5 331.2 631.8 332.3 635.0 334.5C638.2 336.7 642.1 339.2 645.0 342.0C647.9 344.8 650.6 348.3 652.5 351.0C654.4 353.7 655.7 355.8 656.5 358.0C657.3 360.2 657.3 363.4 657.5 364.5" fill="none" stroke="#7c3b14" stroke-width="3.8" stroke-linecap="round"/>
<path d="M681.0 552.0C678.8 551.7 672.1 550.4 668.0 550.3C663.9 550.2 659.9 550.0 656.5 551.3C653.1 552.6 649.8 554.9 647.5 558.0C645.2 561.1 644.9 566.7 643.0 570.0C641.1 573.3 638.6 575.9 636.0 578.0C633.4 580.1 630.0 580.7 627.4 582.5C624.8 584.3 621.5 586.8 620.3 589.0C619.1 591.2 619.8 593.8 620.3 596.0C620.8 598.2 622.7 601.0 623.2 602.0" fill="none" stroke="#7c3b14" stroke-width="4" stroke-linecap="round"/>
</svg></div>
<div class="" style="position:absolute;left:709px;top:162px;width:21px;height:543px;background:#262626;"></div>
<div class="" style="position:absolute;left:709px;top:176px;width:19.5px;height:518px;background:linear-gradient(90deg,#444,#363636 40%,#2b2b2b);border-radius:8px;"></div>
<div class="" style="position:absolute;left:710.3px;top:402px;width:17.7px;height:49px;background:linear-gradient(90deg,#6c6c6c,#585858);border-radius:4px;"></div>
<svg style="position:absolute;left:715px;top:166.500px" width="8" height="7"><path d="M4 0l4 7h-8z" fill="#8a8a8a"/></svg>
<svg style="position:absolute;left:715px;top:698px" width="8" height="7"><path d="M0 0h8l-4 7z" fill="#8a8a8a"/></svg>
<div class="" style="position:absolute;left:729px;top:162px;width:1px;height:543px;background:#414141;"></div>
<div class="" style="position:absolute;left:731px;top:141px;width:293px;height:564px;background:#262626;"></div>
<div class="" style="position:absolute;left:731px;top:141px;width:2px;height:564px;background:#2e2e2e;"></div>
<div class="" style="position:absolute;left:733px;top:141px;width:291px;height:1px;background:#4a86b8;"></div>
<div class="" style="position:absolute;left:733px;top:142px;width:291px;height:22px;background:#3a3a3a;"></div>
<span class="t" style="left:855.5px;top:148.57px;font-size:11.5px;line-height:11.5px;color:#d8d8d8;font-weight:normal;transform:scaleX(0.8356);">Lớp</span>
<svg style="position:absolute;left:994px;top:147px" width="11" height="11" viewBox="0 0 11 11" fill="none" stroke="#d0d0d0" stroke-width="1.200"><path d="M5 2.500H1v7.500h7.500V6"/><path d="M6 1h4v4M10 1L5 6"/></svg>
<svg style="position:absolute;left:1010px;top:148px" width="10" height="10" viewBox="0 0 10 10"><path d="M1.500 1.500l7 7M8.500 1.500l-7 7" stroke="#dcdcdc" stroke-width="2.600"/></svg>
<span class="t" style="left:740.0px;top:172.57px;font-size:11.5px;line-height:11.5px;color:#e0e0e0;font-weight:normal;transform:scaleX(0.9522);">Độ trong</span>
<div class="" style="position:absolute;left:813px;top:170px;width:166px;height:15px;background:linear-gradient(90deg,#7cc3f5,#4f95cd);border:1px solid #3d7fb5;box-sizing:border-box;"></div>
<span class="t" style="left:986.0px;top:172.57px;font-size:11.5px;line-height:11.5px;color:#e0e0e0;font-weight:normal;transform:scaleX(0.9353);">100 %</span>
<span class="t" style="left:740.0px;top:197.07px;font-size:11.5px;line-height:11.5px;color:#e0e0e0;font-weight:normal;transform:scaleX(0.9199);">Pha trộn</span>
<div class="" style="position:absolute;left:814px;top:192px;width:203px;height:20px;background:#4a4a4a;border-radius:3px;"></div>
<span class="t" style="left:816.5px;top:197.07px;font-size:11.5px;line-height:11.5px;color:#dcdcdc;font-weight:normal;transform:scaleX(0.8917);">Bình thường</span>
<svg style="position:absolute;left:1005px;top:201px" width="8" height="4"><path d="M0 0h8l-4 4z" fill="#8c8c8c"/></svg>
<div class="" style="position:absolute;left:743px;top:223.5px;width:11px;height:11px;box-sizing:border-box;border:1px solid #e0e0e0;background:#222;"></div>
<span class="t" style="left:759.6px;top:224.07px;font-size:11.5px;line-height:11.5px;color:#e0e0e0;font-weight:normal;transform:scaleX(0.9160);">Bảo vệ alpha</span>
<div class="" style="position:absolute;left:838.5px;top:223.5px;width:11px;height:11px;box-sizing:border-box;border:1px solid #555;"></div>
<span class="t" style="left:854.0px;top:224.07px;font-size:11.5px;line-height:11.5px;color:#7a7a7a;font-weight:normal;transform:scaleX(0.9192);">Xén bớt</span>
<div class="" style="position:absolute;left:932px;top:223.5px;width:11px;height:11px;box-sizing:border-box;border:1px solid #e0e0e0;background:#222;"></div>
<span class="t" style="left:948.5px;top:224.07px;font-size:11.5px;line-height:11.5px;color:#e0e0e0;font-weight:normal;transform:scaleX(0.8749);">Khóa</span>
<div class="" style="position:absolute;left:737px;top:243px;width:264px;height:89px;background:#2a2a2a;"></div>
<div class="" style="position:absolute;left:737px;top:243px;width:264px;height:39px;background:#585858;"></div>
<div class="" style="position:absolute;left:737px;top:283px;width:19px;height:39px;background:#585858;"></div>
<div class="" style="position:absolute;left:756px;top:283px;width:245px;height:39px;background:#4e98d2;"></div>
<div class="" style="position:absolute;left:737px;top:323px;width:264px;height:8px;background:#585858;"></div>
<div class="" style="position:absolute;left:741.5px;top:257.5px;width:9px;height:9px;border-radius:50%;background:radial-gradient(circle at 45% 40%,#e8e8e8,#bdbdbd 60%,#8a8a8a);"></div>
<div class="" style="position:absolute;left:741.5px;top:297.5px;width:9px;height:9px;border-radius:50%;background:radial-gradient(circle at 45% 40%,#e8e8e8,#bdbdbd 60%,#8a8a8a);"></div>
<div class="" style="position:absolute;left:770.5px;top:255px;width:35px;height:13px;background:#fff;overflow:hidden;"><svg width="35" height="13"><text x="1" y="5.5" font-family="Liberation Sans,sans-serif" font-size="4.6" fill="#9a4a2a">@hamhoc2009</text><text x="1" y="11.5" font-family="Liberation Sans,sans-serif" font-size="4.6" fill="#9a4a2a">#hoidap247...</text></svg></div>
<div class="" style="position:absolute;left:770.5px;top:284.5px;width:35px;height:35px;background-color:#fff;background-image:linear-gradient(45deg,#e4e4e4 25%,transparent 25%,transparent 75%,#e4e4e4 75%),linear-gradient(45deg,#e4e4e4 25%,transparent 25%,transparent 75%,#e4e4e4 75%);background-size:6px 6px;background-position:0 0,3px 3px;border:1px solid #e8d8c8;box-sizing:border-box;"></div>
<span class="t" style="left:822.0px;top:257.22px;font-size:12.5px;line-height:12.5px;color:#f0f0f0;font-weight:normal;transform:scaleX(0.9945);">@hamhoc2009</span>
<span class="t" style="left:822.0px;top:297.22px;font-size:12.5px;line-height:12.5px;color:#fff;font-weight:bold;transform:scaleX(0.9799);">Lớp1</span>
<svg style="position:absolute;left:980px;top:294.5px" width="18" height="18" viewBox="-9 -9 18 18" fill="#fff"><circle r="6.300"/><rect x="-2" y="-9" width="4" height="5" transform="rotate(0)"/><rect x="-2" y="-9" width="4" height="5" transform="rotate(45)"/><rect x="-2" y="-9" width="4" height="5" transform="rotate(90)"/><rect x="-2" y="-9" width="4" height="5" transform="rotate(135)"/><rect x="-2" y="-9" width="4" height="5" transform="rotate(180)"/><rect x="-2" y="-9" width="4" height="5" transform="rotate(225)"/><rect x="-2" y="-9" width="4" height="5" transform="rotate(270)"/><rect x="-2" y="-9" width="4" height="5" transform="rotate(315)"/><circle r="2.600" fill="#4e98d2"/></svg>
<div class="" style="position:absolute;left:1002px;top:243px;width:20px;height:89px;background:#262626;"></div>
<svg style="position:absolute;left:1008px;top:244.500px" width="8" height="6"><path d="M4 0l4 6h-8z" fill="#9a9a9a"/></svg>
<div class="" style="position:absolute;left:1003px;top:253px;width:18px;height:67px;background:linear-gradient(90deg,#7e7e7e,#5c5c5c);border-radius:5px;"></div>
<svg style="position:absolute;left:1008px;top:323.500px" width="8" height="6"><path d="M0 0h8l-4 6z" fill="#9a9a9a"/></svg>
<div class="b " style="left:740px;top:336px;width:23px;height:23px"><svg style="left:-1px;top:-1px" width="23" height="23" viewBox="0 0 23 23"><path d="M5.500 4.500h8l4 4v10h-12z" fill="none" stroke="#e8e8e8" stroke-width="1.400" stroke-linejoin="round"/><path d="M13.300 4.700v4h4" fill="none" stroke="#e8e8e8" stroke-width="1.100"/></svg></div>
<div class="b " style="left:767px;top:336px;width:23px;height:23px"><svg style="left:-1px;top:-1px" width="23" height="23" viewBox="0 0 23 23"><path d="M5.500 4.500h8l4 4v10h-12z" fill="none" stroke="#e8e8e8" stroke-width="1.400" stroke-linejoin="round"/><path d="M13.300 4.700v4h4" fill="none" stroke="#e8e8e8" stroke-width="1.100"/><text x="11.400" y="15.800" text-anchor="middle" font-family="Liberation Sans,sans-serif" font-weight="bold" font-size="8.500" fill="#e8e8e8">8</text></svg></div>
<div class="b " style="left:794px;top:336px;width:23px;height:23px"><svg style="left:-1px;top:-1px" width="23" height="23" viewBox="0 0 23 23"><path d="M5.500 4.500h8l4 4v10h-12z" fill="none" stroke="#e8e8e8" stroke-width="1.400" stroke-linejoin="round"/><path d="M13.300 4.700v4h4" fill="none" stroke="#e8e8e8" stroke-width="1.100"/><text x="11.400" y="15.800" text-anchor="middle" font-family="Liberation Sans,sans-serif" font-weight="bold" font-size="8.500" fill="#e8e8e8">1</text></svg></div>
<div class="b " style="left:821px;top:336px;width:30px;height:23px"><svg style="left:-1px;top:-1px" width="30" height="23" viewBox="0 0 30 23"><path d="M5.500 4.500h5.500l3 3v4M10.500 15.500h-5v-11" fill="none" stroke="#b4b4b4" stroke-width="1.200"/><path d="M10.800 4.700v3h3" fill="none" stroke="#b4b4b4" stroke-width="1"/><path d="M13.500 12.500v6.500M10.300 15.800h6.500" stroke="#f4f4f4" stroke-width="1.600"/><path d="M20 10h7.500l-3.750 4.200z" fill="#e8e8e8"/></svg></div>
<div class="b " style="left:855px;top:336px;width:23px;height:23px"><svg style="left:-1px;top:-1px" width="23" height="23" viewBox="0 0 23 23"><path d="M3.500 6.500a1.200 1.200 0 0 1 1.200-1.200h4.300l1.600 1.900h7.700a1.200 1.200 0 0 1 1.200 1.200v8.900a1.200 1.200 0 0 1-1.200 1.200h-13.600a1.200 1.200 0 0 1-1.200-1.200z" fill="#e8e8e8"/></svg></div>
<div class="b " style="left:889px;top:336px;width:23px;height:23px"><svg style="left:-1px;top:-1px" width="23" height="23" viewBox="0 0 23 23"><rect x="4.500" y="8" width="10" height="10" fill="none" stroke="#e8e8e8" stroke-width="1.300"/><path d="M7.800 8v-3.200h10.200v10.200h-3.300" fill="none" stroke="#e8e8e8" stroke-width="1.300"/></svg></div>
<div class="b dk" style="left:916.5px;top:336px;width:23px;height:23px"><svg style="left:-1px;top:-1px" width="23" height="23" viewBox="0 0 23 23"><rect x="4.500" y="5" width="4" height="4" fill="none" stroke="#e8e8e8" stroke-width="1"/><rect x="4.500" y="13" width="4" height="4" fill="none" stroke="#e8e8e8" stroke-width="1"/><path d="M5.300 8.200l2.400-2.400M5.300 16.200l2.400-2.400" stroke="#e8e8e8" stroke-width=".9"/><path d="M9.500 7h2v8h-2M11.500 11h2" fill="none" stroke="#e8e8e8" stroke-width="1"/><rect x="13.500" y="8.800" width="4.500" height="4.500" fill="#e8e8e8"/></svg></div>
<div class="b " style="left:950px;top:336px;width:23px;height:23px"><svg style="left:-1px;top:-1px" width="23" height="23" viewBox="0 0 23 23"><path d="M4.500 7.500h14M9 7.300v-2.300h5v2.300" fill="none" stroke="#e8e8e8" stroke-width="1.500"/><path d="M5.800 9.500h11.400l-.8 9.300h-9.800z" fill="none" stroke="#e8e8e8" stroke-width="1.500"/><path d="M9.300 11v6.300M11.500 11v6.300M13.700 11v6.300" stroke="#e8e8e8" stroke-width="1.400"/></svg></div>
<div class="sep" style="left:883px;top:342px;height:12px"></div>
<div class="sep" style="left:944px;top:342px;height:12px"></div>
<div class="" style="position:absolute;left:733px;top:369px;width:291px;height:1px;background:#4a86b8;"></div>
<div class="" style="position:absolute;left:733px;top:370px;width:291px;height:21px;background:#3a3a3a;"></div>
<span class="t" style="left:853.0px;top:376.57px;font-size:11.5px;line-height:11.5px;color:#d8d8d8;font-weight:normal;transform:scaleX(0.9162);">Màu</span>
<svg style="position:absolute;left:994px;top:375px" width="11" height="11" viewBox="0 0 11 11" fill="none" stroke="#d0d0d0" stroke-width="1.200"><path d="M5 2.500H1v7.500h7.500V6"/><path d="M6 1h4v4M10 1L5 6"/></svg>
<svg style="position:absolute;left:1010px;top:376px" width="10" height="10" viewBox="0 0 10 10"><path d="M1.500 1.500l7 7M8.500 1.500l-7 7" stroke="#dcdcdc" stroke-width="2.600"/></svg>
<div class="" style="position:absolute;left:751.5px;top:408.5px;width:20.5px;height:20.5px;background:#ffebbc;"></div>
<div class="" style="position:absolute;left:741.5px;top:398.5px;width:22px;height:22px;background:#7b3a14;border:2px solid #e11212;box-sizing:border-box;"></div>
<div class="" style="position:absolute;left:745.5px;top:436.5px;width:23.5px;height:23.5px;background-color:#fff;background-image:linear-gradient(45deg,#d8d8d8 25%,transparent 25%,transparent 75%,#d8d8d8 75%),linear-gradient(45deg,#d8d8d8 25%,transparent 25%,transparent 75%,#d8d8d8 75%);background-size:12px 12px;background-position:0 0,6px 6px;"></div>
<span class="t" style="left:742.5px;top:468.26px;font-size:9.5px;line-height:9.5px;color:#d0d0d0;font-weight:normal;transform:scaleX(0.9267);">R:123</span>
<span class="t" style="left:742.5px;top:479.26px;font-size:9.5px;line-height:9.5px;color:#d0d0d0;font-weight:normal;transform:scaleX(0.9462);">G:58</span>
<span class="t" style="left:742.5px;top:490.26px;font-size:9.5px;line-height:9.5px;color:#d0d0d0;font-weight:normal;transform:scaleX(0.9464);">B:20</span>
<span class="t" style="left:742.5px;top:508.76px;font-size:9.5px;line-height:9.5px;color:#d0d0d0;font-weight:normal;transform:scaleX(1.0104);">#7B3A14</span>
<div class="b " style="left:744px;top:532px;width:23px;height:23px"><svg style="left:-1px;top:-1px" width="23" height="23" viewBox="0 0 23 23"><g transform="translate(1.2 1.2) scale(.9)"><path d="M11.500 4c4.800 0 8.300 3 8.300 6.500c0 2.500-2 3.800-4 3.500c-1.800-.3-2.800.8-2 2.200c.8 1.600-.3 3-2.600 3c-4.300 0-7.700-3.300-7.700-7.600c0-4.300 3.500-7.600 8-7.600z" fill="#e8e8e8"/><circle cx="7.300" cy="11.500" r="1.400" fill="#4b4b4b"/><circle cx="9.500" cy="7.500" r="1.400" fill="#4b4b4b"/><circle cx="14" cy="7" r="1.400" fill="#4b4b4b"/><circle cx="16.800" cy="10.300" r="1.300" fill="#4b4b4b"/></g></svg></div>
<div class="b " style="left:771px;top:532px;width:23px;height:23px"><svg style="left:-1px;top:-1px" width="23" height="23" viewBox="0 0 23 23"><g transform="translate(-1.500 -1.500) scale(.85)"><path d="M11.500 4c4.800 0 8.300 3 8.300 6.500c0 2.500-2 3.800-4 3.500c-1.800-.3-2.800.8-2 2.200c.8 1.600-.3 3-2.600 3c-4.300 0-7.700-3.300-7.700-7.600c0-4.300 3.500-7.600 8-7.600z" fill="#e8e8e8"/><circle cx="7.300" cy="11.500" r="1.400" fill="#4b4b4b"/><circle cx="9.500" cy="7.500" r="1.400" fill="#4b4b4b"/><circle cx="14" cy="7" r="1.400" fill="#4b4b4b"/><circle cx="16.800" cy="10.300" r="1.300" fill="#4b4b4b"/></g><rect x="10" y="14" width="9.500" height="4.800" fill="#4b4b4b" stroke="#e8e8e8" stroke-width="1.200"/><path d="M12 16.400h5.500" stroke="#e8e8e8" stroke-width="1.300"/></svg></div>
<div class="" style="position:absolute;left:802px;top:393px;width:208px;height:208px;border-radius:50%;background:conic-gradient(from 90deg,#f00,#ff0,#0f0,#0ff,#00f,#f0f,#f00);-webkit-mask:radial-gradient(circle,transparent 82.5px,#000 83.5px,#000 103.5px,transparent 104.5px);mask:radial-gradient(circle,transparent 82.5px,#000 83.5px,#000 103.5px,transparent 104.5px);"></div>
<div class="" style="position:absolute;left:848px;top:439px;width:117px;height:117px;background:linear-gradient(to bottom,rgba(0,0,0,0),#000),linear-gradient(to right,#fff,#ff5e00);"></div>
<svg style="position:absolute;left:930px;top:480px" width="80" height="70" viewBox="930 480 80 70"><circle cx="946" cy="499" r="5.5" fill="none" stroke="#fff" stroke-width="2.6"/><circle cx="993" cy="532" r="5.5" fill="none" stroke="#fff" stroke-width="2.6"/></svg>
<div class="" style="position:absolute;left:733px;top:609px;width:291px;height:1px;background:#4a86b8;"></div>
<div class="" style="position:absolute;left:733px;top:610px;width:291px;height:20px;background:#3a3a3a;"></div>
<span class="t" style="left:839.0px;top:616.07px;font-size:11.5px;line-height:11.5px;color:#d8d8d8;font-weight:normal;transform:scaleX(0.8811);">Brush Size</span>
<svg style="position:absolute;left:994px;top:614px" width="11" height="11" viewBox="0 0 11 11" fill="none" stroke="#d0d0d0" stroke-width="1.200"><path d="M5 2.500H1v7.500h7.500V6"/><path d="M6 1h4v4M10 1L5 6"/></svg>
<svg style="position:absolute;left:1010px;top:615px" width="10" height="10" viewBox="0 0 10 10"><path d="M1.500 1.500l7 7M8.500 1.500l-7 7" stroke="#dcdcdc" stroke-width="2.600"/></svg>
<div class="" style="position:absolute;left:733px;top:630px;width:271px;height:75px;background:#3a3a3a;"></div>
<div class="" style="position:absolute;left:973px;top:631px;width:31px;height:74px;background:#484848;"></div>
<div class="" style="position:absolute;left:735px;top:631px;width:38px;height:48px;background:#595959;"></div>
<div class="" style="position:absolute;left:735px;top:681px;width:38px;height:24px;background:#595959;"></div>
<div class="" style="position:absolute;left:753.4px;top:649.4px;width:1.2px;height:1.2px;border-radius:50%;background:#8a8a8a;"></div>
<div class="" style="position:absolute;left:750.8px;top:696.8px;width:6.4px;height:6.4px;border-radius:50%;background:#f4f4f4;"></div>
<span class="t" style="left:751.4px;top:668.76px;font-size:9.5px;line-height:9.5px;color:#fff;font-weight:normal;transform:scaleX(1.0000);">1</span>
<div class="" style="position:absolute;left:775px;top:631px;width:38px;height:48px;background:#595959;"></div>
<div class="" style="position:absolute;left:775px;top:681px;width:38px;height:24px;background:#595959;"></div>
<div class="" style="position:absolute;left:793.2px;top:649.2px;width:1.6px;height:1.6px;border-radius:50%;background:#a0a0a0;"></div>
<div class="" style="position:absolute;left:789px;top:695px;width:10px;height:10px;border-radius:50%;background:#f4f4f4;"></div>
<span class="t" style="left:787.4px;top:668.76px;font-size:9.5px;line-height:9.5px;color:#fff;font-weight:normal;transform:scaleX(1.0000);">1.5</span>
<div class="" style="position:absolute;left:815px;top:631px;width:38px;height:48px;background:#595959;"></div>
<div class="" style="position:absolute;left:815px;top:681px;width:38px;height:24px;background:#595959;"></div>
<div class="" style="position:absolute;left:833.0px;top:649.0px;width:2.0px;height:2.0px;border-radius:50%;background:#fff;"></div>
<div class="" style="position:absolute;left:828px;top:694px;width:12px;height:12px;border-radius:50%;background:#f4f4f4;"></div>
<span class="t" style="left:831.4px;top:668.76px;font-size:9.5px;line-height:9.5px;color:#fff;font-weight:normal;transform:scaleX(1.0000);">2</span>
<div class="" style="position:absolute;left:855px;top:631px;width:38px;height:48px;background:#595959;"></div>
<div class="" style="position:absolute;left:855px;top:681px;width:38px;height:24px;background:#595959;"></div>
<div class="" style="position:absolute;left:872.5px;top:648.5px;width:3.0px;height:3.0px;border-radius:50%;background:#fff;"></div>
<div class="" style="position:absolute;left:865.5px;top:691.5px;width:17.0px;height:17.0px;border-radius:50%;background:#f4f4f4;"></div>
<span class="t" style="left:871.4px;top:668.76px;font-size:9.5px;line-height:9.5px;color:#fff;font-weight:normal;transform:scaleX(1.0000);">3</span>
<div class="" style="position:absolute;left:895px;top:631px;width:38px;height:48px;background:#595959;"></div>
<div class="" style="position:absolute;left:895px;top:681px;width:38px;height:24px;background:#595959;"></div>
<div class="" style="position:absolute;left:911.8px;top:647.8px;width:4.4px;height:4.4px;border-radius:50%;background:#fff;"></div>
<div class="" style="position:absolute;left:904px;top:690px;width:20px;height:20px;border-radius:50%;background:#f4f4f4;"></div>
<span class="t" style="left:911.4px;top:668.76px;font-size:9.5px;line-height:9.5px;color:#fff;font-weight:normal;transform:scaleX(1.0000);">4</span>
<div class="" style="position:absolute;left:935px;top:631px;width:38px;height:48px;background:#595959;"></div>
<div class="" style="position:absolute;left:935px;top:681px;width:38px;height:24px;background:#595959;"></div>
<div class="" style="position:absolute;left:951.4px;top:647.4px;width:5.2px;height:5.2px;border-radius:50%;background:#fff;"></div>
<div class="" style="position:absolute;left:942px;top:688px;width:24px;height:24px;border-radius:50%;background:#f4f4f4;"></div>
<span class="t" style="left:951.4px;top:668.76px;font-size:9.5px;line-height:9.5px;color:#fff;font-weight:normal;transform:scaleX(1.0000);">5</span>
<div class="" style="position:absolute;left:1004px;top:630px;width:20px;height:75px;background:linear-gradient(90deg,#2e2e2e,#3a3a3a);"></div>
<svg style="position:absolute;left:1010px;top:633px" width="8" height="6"><path d="M4 0l4 6h-8z" fill="#9a9a9a"/></svg>
<div class="" style="position:absolute;left:1005.5px;top:642.5px;width:17px;height:28px;background:linear-gradient(90deg,#7e7e7e,#5c5c5c);border-radius:5px;"></div>
</body></html>
